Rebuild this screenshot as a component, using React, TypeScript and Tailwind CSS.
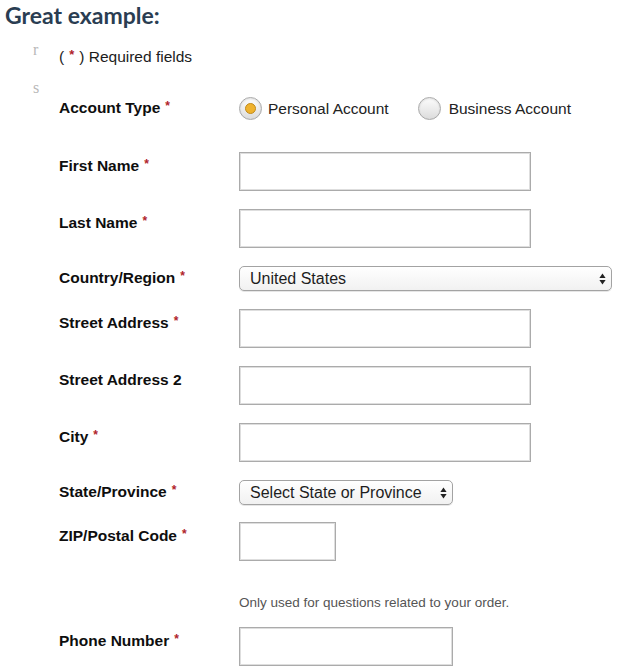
import React from "react";

const Star = () => (
  <span className="text-[#b0232a] text-[12px] relative -top-[3px] ml-[5px]">*</span>
);

const Label = ({ text, req = true, center = false }: { text: string; req?: boolean; center?: boolean }) => (
  <div
    className={
      "w-[180px] shrink-0 text-[15.5px] font-bold leading-[20px] text-[#0e0e0e] " +
      (center ? "self-center" : "pt-[4px]")
    }
  >
    {text}
    {req && <Star />}
  </div>
);

const TextBox = ({ w }: { w: string }) => (
  <div className={"h-[39px] bg-white border border-[#ababab] shadow-[inset_0_0_0_1px_#dedede] " + w} />
);

const Arrows = () => (
  <svg width="7" height="12" viewBox="0 0 7 12" className="shrink-0">
    <path d="M3.5 0.5 L6.6 5 L0.4 5 Z" fill="#222" />
    <path d="M3.5 11.5 L6.6 7 L0.4 7 Z" fill="#222" />
  </svg>
);

const SelectBox = ({ text, w }: { text: string; w: string }) => (
  <div
    className={
      "h-[25px] flex items-center justify-between pl-[10px] pr-[5px] rounded-[5px] border border-[#a3a3a3] bg-gradient-to-b from-white to-[#f1f1f1] shadow-[0_1px_0_#e6e6e6] " +
      w
    }
  >
    <span className="text-[16px] leading-[20px] text-[#1e1e1e]">{text}</span>
    <Arrows />
  </div>
);

const Radio = ({ checked }: { checked?: boolean }) => (
  <div className="w-[23px] h-[23px] rounded-full border border-[#a9a9a9] bg-gradient-to-b from-[#fdfdfd] to-[#dcdcdc] shadow-[inset_0_1px_2px_rgba(0,0,0,0.12)] flex items-center justify-center shrink-0">
    {checked && (
      <div className="w-[11px] h-[11px] rounded-full bg-[#efb22d] border border-[#c08a1b]" />
    )}
  </div>
);

export default function App() {
  return (
    <div className="bg-white w-[621px] h-[669px] overflow-hidden" style={{ fontFamily: '"Liberation Sans", Arial, sans-serif' }}>
      <div
        className="pl-[5px] text-[23px] font-bold leading-[30px] text-[#2a3d52]"
        style={{ fontFamily: "Lato, sans-serif" }}
      >
        Great example:
      </div>
      <div className="flex pl-[33px]">
        <div
          className="w-[26px] shrink-0 flex flex-col text-[16px] leading-[16px] text-[#b8b8b8]"
          style={{ fontFamily: '"Liberation Serif", serif' }}
        >
          <span className="mt-[12px]">r</span>
          <span className="mt-[22px]">s</span>
        </div>
        <div className="flex flex-col">
          <div className="mt-[17px] text-[15.5px] leading-[20px] text-[#1c1c1c]">
            (<span className="ml-[5px] mr-[5px] text-[#b0232a] text-[13px] font-bold relative -top-[3px]">*</span>) Required fields
          </div>

          <div className="mt-[29px] flex h-[23px] items-center">
            <Label text="Account Type" center />
            <div className="flex items-center">
              <Radio checked />
              <span className="ml-[6px] text-[15.5px] leading-[20px] text-[#222]">Personal Account</span>
              <div className="ml-[29px]">
                <Radio />
              </div>
              <span className="ml-[8px] text-[15.5px] leading-[20px] text-[#222]">Business Account</span>
            </div>
          </div>

          <div className="mt-[32px] flex">
            <Label text="First Name" />
            <TextBox w="w-[292px]" />
          </div>

          <div className="mt-[18px] flex">
            <Label text="Last Name" />
            <TextBox w="w-[292px]" />
          </div>

          <div className="mt-[18px] flex">
            <Label text="Country/Region" center />
            <SelectBox text="United States" w="w-[373px]" />
          </div>

          <div className="mt-[18px] flex">
            <Label text="Street Address" />
            <TextBox w="w-[292px]" />
          </div>

          <div className="mt-[18px] flex">
            <Label text="Street Address 2" req={false} />
            <TextBox w="w-[292px]" />
          </div>

          <div className="mt-[18px] flex">
            <Label text="City" />
            <TextBox w="w-[292px]" />
          </div>

          <div className="mt-[18px] flex">
            <Label text="State/Province" center />
            <SelectBox text="Select State or Province" w="w-[214px]" />
          </div>

          <div className="mt-[17px] flex">
            <Label text="ZIP/Postal Code" />
            <TextBox w="w-[97px]" />
          </div>

          <div className="mt-[34px] flex">
            <div className="w-[180px] shrink-0" />
            <div className="text-[13.5px] leading-[16px] text-[#555]">Only used for questions related to your order.</div>
          </div>

          <div className="mt-[16px] flex">
            <Label text="Phone Number" />
            <TextBox w="w-[214px]" />
          </div>
        </div>
      </div>
    </div>
  );
}
